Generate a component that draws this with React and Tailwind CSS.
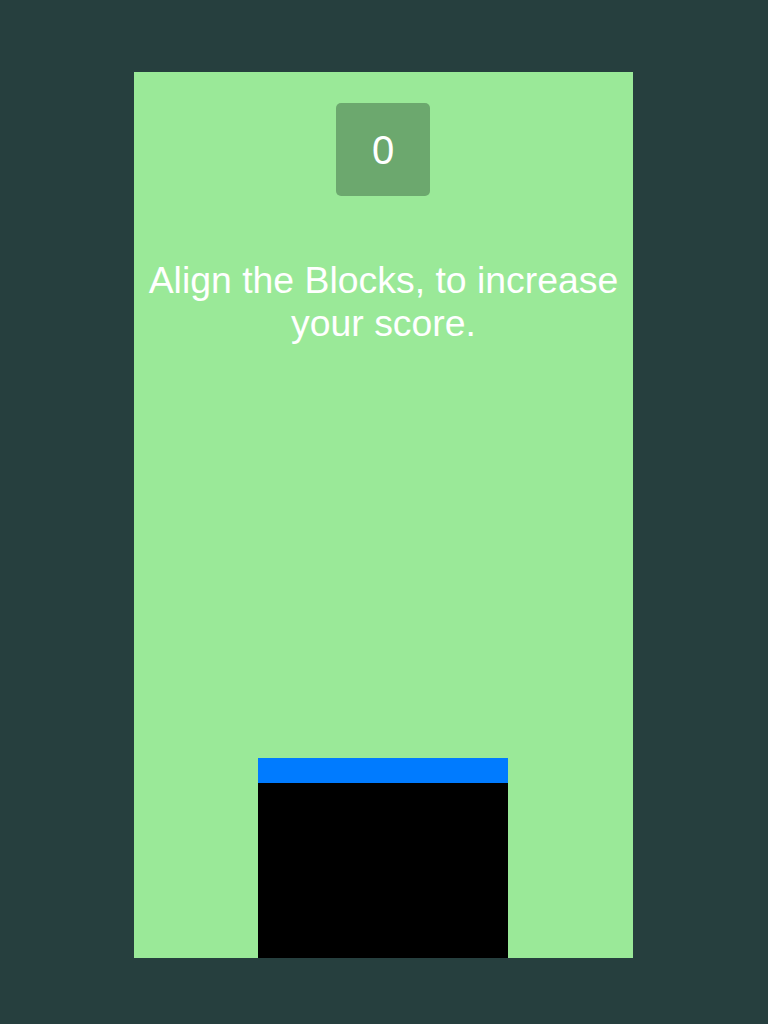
export default function App() {
  const score = 0;
  return (
    <div className="min-h-screen bg-[#263f3e] pt-[72px] pb-[66px]" style={{ fontFamily: '"Liberation Sans", Arial, sans-serif' }}>
      <div className="ml-[134px] flex h-[886px] w-[499px] flex-col bg-[#9ae998]">
        <div className="ml-[202px] mt-[31px] flex h-[93px] w-[94px] items-center justify-center rounded-[5px] bg-[#6ca86e] text-[40px] text-white">
          {score}
        </div>
        <p className="mt-[63px] text-center text-[37.4px] leading-[43px] text-white">
          Align the Blocks, to increase your score.
        </p>
        <div className="ml-[124px] mt-auto flex w-[250px] flex-col">
          <div className="h-[25px] bg-[#007bff]" />
          <div className="h-[175px] bg-black" />
        </div>
      </div>
    </div>
  );
}
